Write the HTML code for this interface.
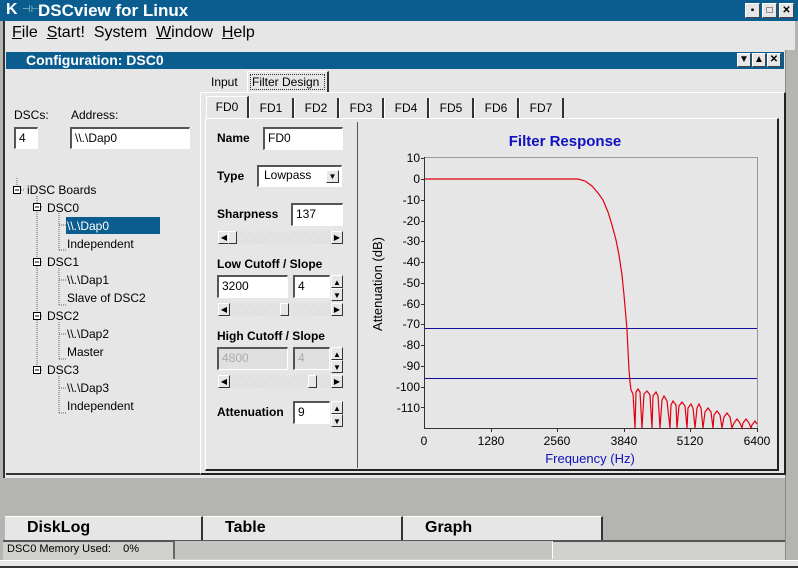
<!DOCTYPE html>
<html><head><meta charset="utf-8"><style>
*{box-sizing:border-box;margin:0;padding:0}
body{width:798px;height:568px;position:relative;overflow:hidden;background:#b4b4b0;font-family:"Liberation Sans",sans-serif;font-size:12px;color:#000}
.a{position:absolute}
.in{position:absolute;background:#fff;border-top:2px solid #555;border-left:2px solid #555;border-bottom:1px solid #fff;border-right:1px solid #fff;padding:2px 3px;font-size:12px}
.b{font-weight:bold;font-size:12px}
.tb{position:absolute;width:15px;height:15px;background:#e6e6e6;border:1px solid #fff;border-right-color:#444;border-bottom-color:#444;font-size:10px;line-height:13px;text-align:center;font-weight:bold}
.sl{position:absolute;height:13px;background:repeating-linear-gradient(45deg,#d8d8d8 0 1px,#ececec 1px 2px)}
.ar{position:absolute;width:12px;height:13px;background:#e6e6e6;border:1px solid #fff;border-right-color:#333;border-bottom-color:#333;font-size:8px;line-height:11px;text-align:center}
.tab{position:absolute;top:98px;height:20px;border-right:2px solid #333;font-size:12px;line-height:20px;text-align:center;border-left:1px solid #fff}
.sp{position:absolute;width:12px;height:26px;background:#e6e6e6}
.sp div{height:13px;font-size:8px;line-height:13px;text-align:center;border:1px solid #fff;border-right-color:#333;border-bottom-color:#333}
.tree{position:absolute;font-size:12px}
</style></head><body>
<div class="a" style="left:0;top:0;width:798px;height:21px;background:#0b5d8f"></div>
<div class="a" style="left:6px;top:1px;color:#fff;font-weight:bold;font-size:16px">K</div>
<div class="a" style="left:22px;top:4px;color:#9cc;font-size:10px">⊣⊢</div>
<div class="a" style="left:38px;top:1px;color:#fff;font-weight:bold;font-size:17px">DSCview for Linux</div>
<div class="tb" style="left:745px;top:3px">▪</div>
<div class="tb" style="left:762px;top:3px">□</div>
<div class="tb" style="left:779px;top:3px">✕</div>
<div class="a" style="left:3px;top:21px;width:792px;height:457px;background:#e6e6e6;border-left:2px solid #333"></div>
<div class="a" style="left:12px;top:24px;font-size:16px"><u>F</u>ile &nbsp;<u>S</u>tart! &nbsp;System &nbsp;<u>W</u>indow &nbsp;<u>H</u>elp</div>
<div class="a" style="left:785px;top:50px;width:10px;height:518px;background:#b4b4b0;border-left:1px solid #888"></div>
<div class="a" style="left:6px;top:52px;width:778px;height:17px;background:#0b5d8f"></div>
<div class="a" style="left:26px;top:52px;color:#fff;font-weight:bold;font-size:14px">Configuration: DSC0</div>
<div class="tb" style="left:737px;top:53px;width:14px;height:14px;line-height:12px">▼</div>
<div class="tb" style="left:752px;top:53px;width:14px;height:14px;line-height:12px">▲</div>
<div class="tb" style="left:767px;top:53px;width:14px;height:14px;line-height:12px">✕</div>
<div class="a" style="left:6px;top:69px;width:779px;height:406px;background:#e6e6e6;border-bottom:2px solid #333"></div>
<div class="a" style="left:14px;top:108px">DSCs:</div>
<div class="a" style="left:71px;top:108px">Address:</div>
<div class="in" style="left:14px;top:127px;width:24px;height:22px">4</div>
<div class="in" style="left:70px;top:127px;width:120px;height:22px">\\.\Dap0</div>
<svg class="a" style="left:0;top:170px" width="200" height="250">
<g stroke="#666" stroke-dasharray="1,1" fill="none">
<path d="M17 8V15M37 26V202M37 37H43M59 43V80M59 55H66M59 80H66M37 92H43M59 98V135M59 110H66M59 135H66M37 146H43M59 152V189M59 164H66M59 189H66M37 200H43M59 206V243M59 218H66M59 243H66M21 20H25"/>
</g>
<g fill="#fff" stroke="#000"><rect x="13.5" y="16.5" width="7" height="7"/><rect x="33.5" y="33.5" width="7" height="7"/><rect x="33.5" y="88.5" width="7" height="7"/><rect x="33.5" y="142.5" width="7" height="7"/><rect x="33.5" y="196.5" width="7" height="7"/></g>
<g stroke="#000"><path d="M15 20H19M35 37H39M35 92H39M35 146H39M35 200H39"/></g>
</svg>
<div class="a" style="left:66px;top:217px;width:94px;height:17px;background:#0b5d8f"></div>
<div class="tree" style="left:27px;top:183px">iDSC Boards</div>
<div class="tree" style="left:47px;top:201px">DSC0</div>
<div class="tree" style="left:67px;top:219px;color:#fff">\\.\Dap0</div>
<div class="tree" style="left:67px;top:237px">Independent</div>
<div class="tree" style="left:47px;top:255px">DSC1</div>
<div class="tree" style="left:67px;top:273px">\\.\Dap1</div>
<div class="tree" style="left:67px;top:291px">Slave of DSC2</div>
<div class="tree" style="left:47px;top:309px">DSC2</div>
<div class="tree" style="left:67px;top:327px">\\.\Dap2</div>
<div class="tree" style="left:67px;top:345px">Master</div>
<div class="tree" style="left:47px;top:363px">DSC3</div>
<div class="tree" style="left:67px;top:381px">\\.\Dap3</div>
<div class="tree" style="left:67px;top:399px">Independent</div>
<div class="a" style="left:203px;top:72px;width:44px;height:20px;line-height:20px;padding-left:8px">Input</div>
<div class="a" style="left:247px;top:71px;width:82px;height:22px;border-right:2px solid #333;border-left:1px solid #fff;border-top:1px solid #fff;padding:2px"><div style="border:1px dotted #333;height:16px;line-height:14px;padding-left:1px">Filter Design</div></div>
<div class="a" style="left:200px;top:92px;width:586px;height:383px;border-top:1px solid #fff;border-left:1px solid #fff;border-right:2px solid #222;border-bottom:2px solid #222"></div>
<div class="tab" style="left:206px;width:43px;top:96px;height:22px;border-top:1px solid #fff">FD0</div>
<div class="tab" style="left:249px;width:45px">FD1</div>
<div class="tab" style="left:294px;width:45px">FD2</div>
<div class="tab" style="left:339px;width:45px">FD3</div>
<div class="tab" style="left:384px;width:45px">FD4</div>
<div class="tab" style="left:429px;width:45px">FD5</div>
<div class="tab" style="left:474px;width:45px">FD6</div>
<div class="tab" style="left:519px;width:45px">FD7</div>
<div class="a" style="left:205px;top:118px;width:574px;height:353px;border-top:1px solid #fff;border-left:1px solid #fff;border-right:2px solid #222;border-bottom:2px solid #222"></div>
<div class="a" style="left:357px;top:122px;width:1px;height:346px;background:#555"></div>
<div class="a b" style="left:217px;top:131px">Name</div>
<div class="in" style="left:263px;top:127px;width:80px;height:23px">FD0</div>
<div class="a b" style="left:217px;top:169px">Type</div>
<div class="in" style="left:257px;top:165px;width:85px;height:22px;padding:1px 5px">Lowpass<div class="ar" style="right:2px;top:3px;width:13px;height:13px">▼</div></div>
<div class="a b" style="left:217px;top:207px">Sharpness</div>
<div class="in" style="left:291px;top:203px;width:52px;height:23px">137</div>
<div class="sl" style="left:218px;top:231px;width:125px"></div><div class="ar" style="left:218px;top:231px">◀</div><div class="ar" style="left:228px;top:231px;width:9px"></div><div class="ar" style="left:331px;top:231px">▶</div>
<div class="a b" style="left:217px;top:257px">Low Cutoff / Slope</div>
<div class="in" style="left:217px;top:275px;width:71px;height:23px">3200</div>
<div class="in" style="left:293px;top:275px;width:37px;height:23px">4</div>
<div class="sp" style="left:331px;top:275px"><div>▲</div><div>▼</div></div>
<div class="sl" style="left:218px;top:303px;width:125px"></div><div class="ar" style="left:218px;top:303px">◀</div><div class="ar" style="left:280px;top:303px;width:9px"></div><div class="ar" style="left:331px;top:303px">▶</div>
<div class="a b" style="left:217px;top:329px">High Cutoff / Slope</div>
<div class="in" style="left:217px;top:347px;width:71px;height:23px;background:#e0e0e0;color:#aaa">4800</div>
<div class="in" style="left:293px;top:347px;width:37px;height:23px;background:#e0e0e0;color:#aaa">4</div>
<div class="sp" style="left:331px;top:347px"><div>▲</div><div>▼</div></div>
<div class="sl" style="left:218px;top:375px;width:125px"></div><div class="ar" style="left:218px;top:375px">◀</div><div class="ar" style="left:308px;top:375px;width:9px"></div><div class="ar" style="left:331px;top:375px">▶</div>
<div class="a b" style="left:217px;top:405px">Attenuation</div>
<div class="in" style="left:293px;top:401px;width:37px;height:23px">9</div>
<div class="sp" style="left:331px;top:401px"><div>▲</div><div>▼</div></div>
<svg class="a" style="left:0;top:0" width="798" height="568" font-family="Liberation Sans, sans-serif">
<text x="565" y="146" text-anchor="middle" fill="#1010c0" font-weight="bold" font-size="15">Filter Response</text>
<rect x="424.5" y="157.5" width="333" height="271" fill="none" stroke="#999"/>
<path d="M424.5 157V428.5H757" fill="none" stroke="#333"/>
<g stroke="#333"><path d="M421 158.5H424M421 179.5H424M421 200.5H424M421 221.5H424M421 241.5H424M421 262.5H424M421 283.5H424M421 304.5H424M421 324.5H424M421 345.5H424M421 366.5H424M421 387.5H424M421 407.5H424M491.5 428V432M557.5 428V432M624.5 428V432M690.5 428V432M757.5 428V432"/></g>
<g font-size="12" fill="#000" text-anchor="end">
<text x="420" y="162">10</text><text x="420" y="183">0</text><text x="420" y="204">-10</text><text x="420" y="225">-20</text><text x="420" y="245">-30</text><text x="420" y="266">-40</text><text x="420" y="287">-50</text><text x="420" y="308">-60</text><text x="420" y="328">-70</text><text x="420" y="349">-80</text><text x="420" y="370">-90</text><text x="420" y="391">-100</text><text x="420" y="412">-110</text>
</g>
<g font-size="12" text-anchor="middle"><text x="424" y="445">0</text><text x="491" y="445">1280</text><text x="557" y="445">2560</text><text x="624" y="445">3840</text><text x="690" y="445">5120</text><text x="757" y="445">6400</text></g>
<text x="590" y="463" text-anchor="middle" fill="#1010c0" font-size="13">Frequency (Hz)</text>
<text transform="translate(382,284) rotate(-90)" text-anchor="middle" font-size="13">Attenuation (dB)</text>
<g stroke="#1010a0"><path d="M425 328.5H757M425 378.5H757"/></g>
<path fill="none" stroke="#e00010" stroke-width="1.2" d="M425 179H578L585 181L592 186L598 193L603 200L608 212L612 225L616 240L619 255L622 275L624 295L626 318L627 330L628 350L629 370L630 382L631 390L633 394L635 428L636 392L638 389L640 392L642 428L644 394L647 391L650 395L652 428L653 396L656 392L658 396L660 428L662 400L664 396L667 401L670 428L671 405L673 401L676 405L677 428L679 406L682 402L685 406L687 428L688 408L691 404L693 408L695 428L697 408L699 404L701 408L703 428L705 412L708 408L711 412L713 428L714 415L717 411L720 415L722 428L724 417L727 413L730 417L732 428L734 423L737 419L740 423L742 428L743 423L746 419L749 423L751 428L752 425L755 421L757 424"/>
</svg>
<div class="a" style="left:5px;top:516px;width:198px;height:24px;background:#e6e6e6;border-top:1px solid #fff;border-right:2px solid #333;font-weight:bold;font-size:16px;padding:2px 0 0 22px">DiskLog</div>
<div class="a" style="left:203px;top:516px;width:200px;height:24px;background:#e6e6e6;border-top:1px solid #fff;border-right:2px solid #333;font-weight:bold;font-size:16px;padding:2px 0 0 22px">Table</div>
<div class="a" style="left:403px;top:516px;width:200px;height:24px;background:#e6e6e6;border-top:1px solid #fff;border-right:2px solid #333;font-weight:bold;font-size:16px;padding:2px 0 0 22px">Graph</div>
<div class="a" style="left:3px;top:540px;width:782px;height:20px;background:#d0d0cc;border-top:2px solid #555"></div>
<div class="a" style="left:7px;top:543px;font-size:11px">DSC0 Memory Used: &nbsp;&nbsp;&nbsp;0%</div>
<div class="a" style="left:173px;top:541px;width:380px;height:18px;background:#c4c4c0;border-left:2px solid #666;border-right:1px solid #fff"></div>
<div class="a" style="left:0;top:560px;width:798px;height:8px;background:#e6e6e6;border-top:1px solid #fff;border-bottom:2px solid #333"></div>
</body></html>
